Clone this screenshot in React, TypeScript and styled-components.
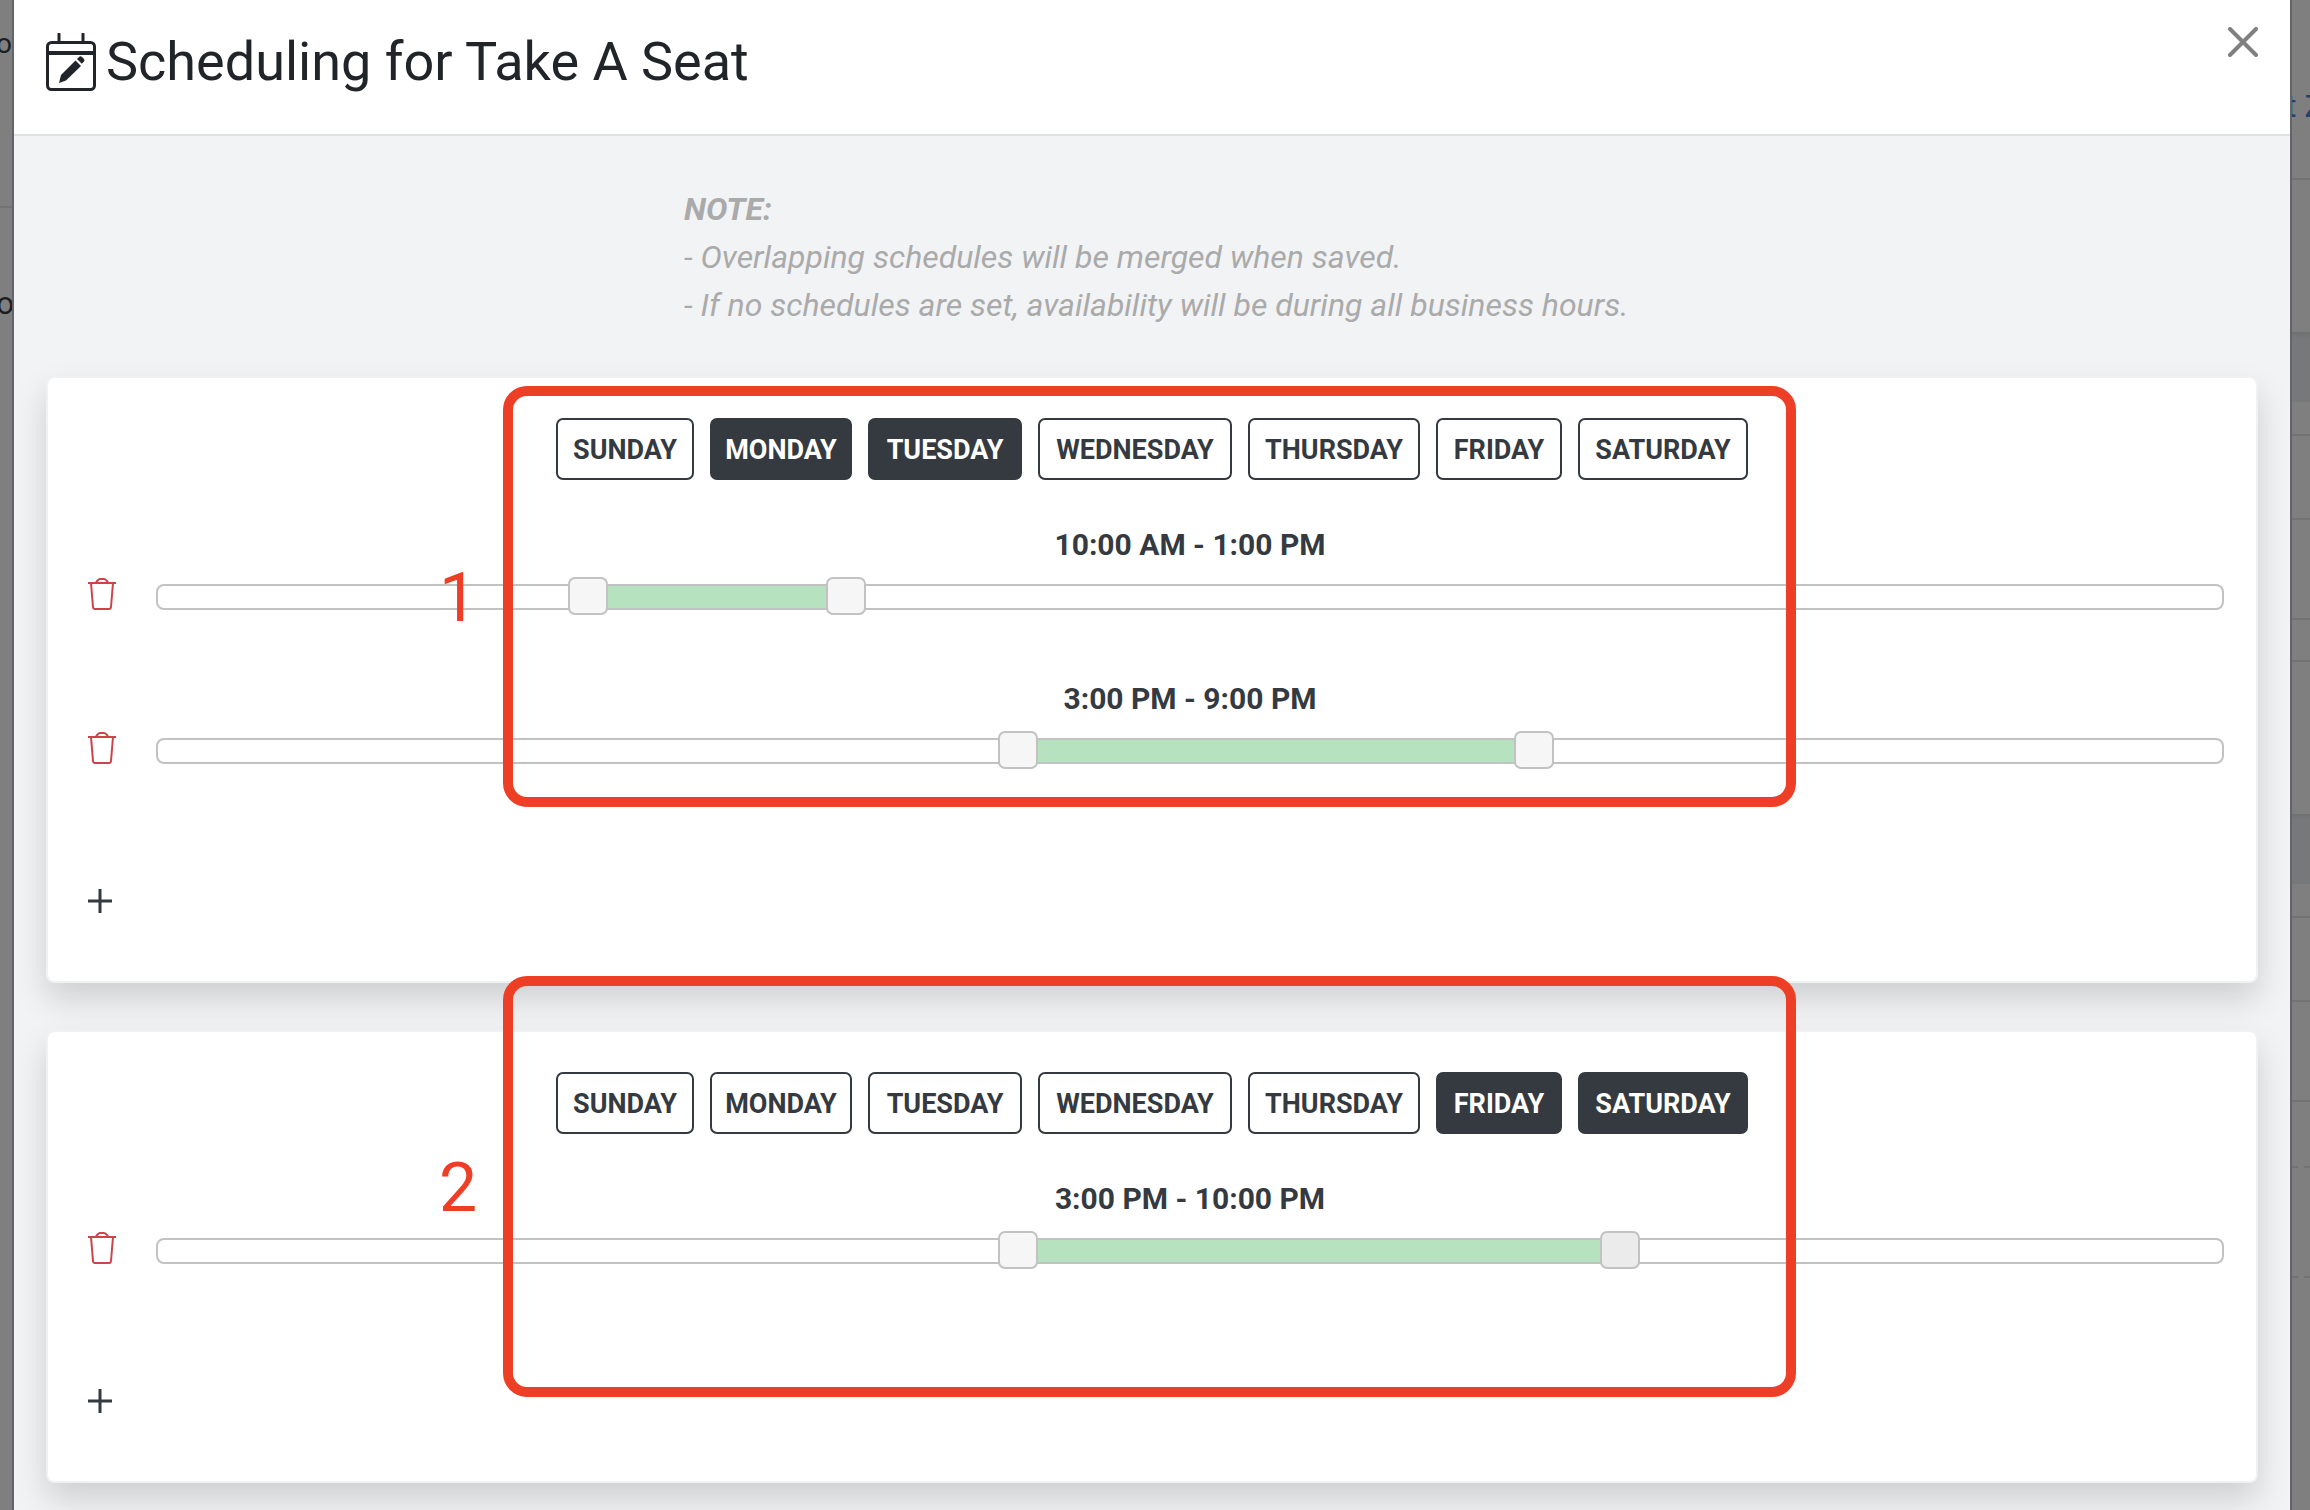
import React, { useState } from "react";
import styled, { createGlobalStyle } from "styled-components";

const ink = "#343a3f";
const mark = "#ec3f26";
const line = "#c2c2c2";

const GlobalStyle = createGlobalStyle`
  *, *::before, *::after { box-sizing: border-box; }
  body {
    margin: 0;
    background: #7f7f7f;
    color: ${ink};
    font-family: Roboto, "Open Sans", sans-serif;
  }
  button { font: inherit; color: inherit; cursor: pointer; }
`;

const Page = styled.div`
  display: grid;
  grid-template-columns: 12px minmax(0, 1fr) 18px;
  height: 100vh;
  overflow: hidden;
`;

const Behind = styled.div`
  display: flex;
  flex-direction: column;
  overflow: hidden;
  background: #7f7f7f;
`;

const Strip = styled.div<{ $h: number; $line?: "solid" | "dashed"; $band?: boolean }>`
  flex: none;
  height: ${(p) => p.$h}px;
  background: ${(p) => (p.$band ? "linear-gradient(#6f7070, #76787a 6px)" : "transparent")};
  border-bottom: ${(p) => (p.$line ? `2px ${p.$line} #727272` : "none")};
`;

const Clipped = styled.div<{ $top: number; $size: number }>`
  margin-left: -4px;
  padding-top: ${(p) => p.$top}px;
  font-size: ${(p) => p.$size}px;
  line-height: 36px;
  color: #1b1e21;
`;

const BackLink = styled.a`
  display: block;
  margin-left: -6px;
  padding-top: 88px;
  font-size: 32px;
  line-height: 36px;
  white-space: nowrap;
  color: #22426b;
  text-decoration: none;
`;

const Modal = styled.main`
  border: solid #646568;
  border-width: 0 2px;
  background: #f1f3f5;
  overflow: hidden;
`;

const Header = styled.header`
  display: flex;
  align-items: flex-start;
  justify-content: space-between;
  height: 136px;
  padding: 27px 32px 0;
  background: #fff;
  border-bottom: 2px solid #dee2e6;
`;

const Title = styled.h1`
  display: flex;
  align-items: center;
  gap: 10px;
  margin: 0;
  font-size: 54px;
  font-weight: 400;
  line-height: 70px;
  color: #212529;
`;

const IconButton = styled.button<{ $color?: string }>`
  display: block;
  padding: 0;
  border: 0;
  background: none;
  color: ${(p) => p.$color ?? ink};
  svg { display: block; }
`;

const Body = styled.div`
  display: flex;
  flex-direction: column;
  gap: 47px;
  padding: 49px 32px;
`;

const Note = styled.p`
  width: 936px;
  max-width: 100%;
  margin: 0 auto;
  font-size: 32px;
  font-style: italic;
  line-height: 48px;
  white-space: nowrap;
  color: #aaa;
`;

const Card = styled.section`
  position: relative;
  padding: 40px 32px 68px 40px;
  background: #fff;
  background-clip: padding-box;
  border: 2px solid #f0f1f3;
  border-radius: 8px;
  box-shadow: 0 16px 32px rgba(0, 0, 0, 0.15);
`;

const Days = styled.div`
  display: grid;
  grid-template-columns: 138px 142px 154px 194px 172px 126px 170px;
  justify-content: center;
  gap: 16px;
  margin: 0 0 40px -8px;
`;

const DayButton = styled.button<{ $on: boolean }>`
  height: 62px;
  padding: 2px 0 0;
  border: 2px solid ${ink};
  border-radius: 7px;
  background: ${(p) => (p.$on ? ink : "#fff")};
  color: ${(p) => (p.$on ? "#fff" : ink)};
  font-size: 27px;
  font-weight: 700;
`;

const Row = styled.div`
  display: grid;
  grid-template-columns: 28px minmax(0, 1fr);
  column-gap: 40px;
  align-items: end;
  padding-bottom: 64px;
`;

const RowLabel = styled.div`
  margin-bottom: 14px;
  font-size: 30px;
  font-weight: 700;
  line-height: 50px;
  text-align: center;
`;

const Track = styled.div`
  position: relative;
  height: 26px;
  border: 2px solid ${line};
  border-radius: 8px;
  background: #fff;
`;

const Fill = styled.div`
  height: 22px;
  background: #b6e2c0;
`;

const Handle = styled.input<{ $active?: boolean }>`
  position: absolute;
  top: -9px;
  left: -20px;
  width: calc(100% + 40px);
  height: 38px;
  margin: 0;
  appearance: none;
  background: none;
  pointer-events: none;
  &::-webkit-slider-thumb {
    appearance: none;
    box-sizing: border-box;
    width: 40px;
    height: 38px;
    border: 2px solid ${line};
    border-radius: 7px;
    background: ${(p) => (p.$active ? "#ebebeb" : "#f6f6f6")};
    pointer-events: auto;
  }
`;

const AddButton = styled(IconButton)`
  margin-top: 61px;
`;

const Outline = styled.div<{ $top: number }>`
  position: absolute;
  top: ${(p) => p.$top}px;
  left: 50%;
  width: 1293px;
  height: 421px;
  margin-left: -649px;
  border: 10px solid ${mark};
  border-radius: 24px;
  pointer-events: none;
`;

const Numeral = styled.span<{ $top: number }>`
  position: absolute;
  top: ${(p) => p.$top}px;
  left: 50%;
  margin-left: -713px;
  font-size: 68px;
  line-height: 80px;
  color: ${mark};
  pointer-events: none;
`;

const CalendarIcon = () => (
  <svg width="50" height="58" viewBox="0 0 50 58" fill="none" stroke="currentColor" strokeWidth="3" aria-hidden="true">
    <rect x="1.5" y="9.5" width="47" height="47" rx="4" />
    <path d="M2 20h46" strokeWidth="4" />
    <path d="M13 1v8M37 1v8" strokeLinecap="round" />
    <path d="M13 50l2-8 14.500-14.500 5.500 5.500L20 47.500z" fill="currentColor" stroke="none" />
    <path d="M31 26l2-2q1.500-1.500 3 0l1.800 1.800q1.500 1.500 0 3l-2 2z" fill="currentColor" stroke="none" />
  </svg>
);

const CloseIcon = () => (
  <svg width="30" height="30" viewBox="0 0 30 30" stroke="currentColor" strokeWidth="4" strokeLinecap="round" aria-hidden="true">
    <path d="M2 2l26 26M28 2L2 28" />
  </svg>
);

const TrashIcon = () => (
  <svg width="28" height="32" viewBox="0 0 28 32" fill="none" stroke="currentColor" strokeWidth="2" aria-hidden="true">
    <path d="M0 5h28" />
    <path d="M8 5q0-1 1.500-2.500Q11 1 12 1h4q1 0 2.500 1.500Q20 4 20 5" />
    <path d="M3 5l2 24q.2 2 2 2h14q1.800 0 2-2l2-24" />
  </svg>
);

const PlusIcon = () => (
  <svg width="24" height="24" viewBox="0 0 24 24" stroke="currentColor" strokeWidth="3" aria-hidden="true">
    <path d="M0 12h24M12 0v24" />
  </svg>
);

const DAY_NAMES = ["SUNDAY", "MONDAY", "TUESDAY", "WEDNESDAY", "THURSDAY", "FRIDAY", "SATURDAY"];
const OPEN = 5;
const CLOSE = 29;

type Range = { from: number; to: number; active?: boolean };
type Schedule = { days: string[]; ranges: Range[]; outlineTop: number; numeralTop: number };

const INITIAL: Schedule[] = [
  { days: ["MONDAY", "TUESDAY"], ranges: [{ from: 10, to: 13 }, { from: 15, to: 21 }], outlineTop: 8, numeralTop: 180 },
  { days: ["FRIDAY", "SATURDAY"], ranges: [{ from: 15, to: 22, active: true }], outlineTop: -56, numeralTop: 116 },
];

const clock = (h: number) => `${h % 12 || 12}:00 ${h % 24 < 12 ? "AM" : "PM"}`;
const percent = (h: number) => ((h - OPEN) / (CLOSE - OPEN)) * 100;

function RangeRow({ range, onChange, onRemove }: { range: Range; onChange: (r: Range) => void; onRemove: () => void }) {
  return (
    <Row>
      <IconButton type="button" $color="#cb444a" aria-label="Delete time range" onClick={onRemove}>
        <TrashIcon />
      </IconButton>
      <div>
        <RowLabel>{`${clock(range.from)} - ${clock(range.to)}`}</RowLabel>
        <Track>
          <Fill
            style={{
              marginLeft: `${percent(range.from)}%`,
              width: `${percent(range.to) - percent(range.from)}%`,
            }}
          />
          <Handle
            type="range"
            aria-label="Start time"
            min={OPEN}
            max={CLOSE}
            value={range.from}
            onChange={(e) => onChange({ ...range, from: Math.min(Number(e.target.value), range.to - 1) })}
          />
          <Handle
            type="range"
            aria-label="End time"
            min={OPEN}
            max={CLOSE}
            value={range.to}
            $active={range.active}
            onChange={(e) => onChange({ ...range, to: Math.max(Number(e.target.value), range.from + 1) })}
          />
        </Track>
      </div>
    </Row>
  );
}

export default function App() {
  const [schedules, setSchedules] = useState(INITIAL);
  const update = (i: number, patch: Partial<Schedule>) =>
    setSchedules((all) => all.map((s, n) => (n === i ? { ...s, ...patch } : s)));

  return (
    <>
      <GlobalStyle />
      <Page>
        <Behind>
          <Strip $h={208} $line="solid"><Clipped $top={26} $size={28}>o</Clipped></Strip>
          <Clipped $top={77} $size={32}>o</Clipped>
        </Behind>
        <Modal>
          <Header>
            <Title><CalendarIcon />Scheduling for Take A Seat</Title>
            <IconButton type="button" $color="#808080" aria-label="Close"><CloseIcon /></IconButton>
          </Header>
          <Body>
            <Note>
              <strong>NOTE:</strong><br />
              - Overlapping schedules will be merged when saved.<br />
              - If no schedules are set, availability will be during all business hours.
            </Note>
            {schedules.map((s, i) => (
              <Card key={i}>
                <Days>
                  {DAY_NAMES.map((day) => {
                    const on = s.days.includes(day);
                    return (
                      <DayButton
                        key={day}
                        type="button"
                        $on={on}
                        aria-pressed={on}
                        onClick={() => update(i, { days: on ? s.days.filter((d) => d !== day) : [...s.days, day] })}
                      >
                        {day}
                      </DayButton>
                    );
                  })}
                </Days>
                {s.ranges.map((range, r) => (
                  <RangeRow
                    key={r}
                    range={range}
                    onChange={(next) => update(i, { ranges: s.ranges.map((x, n) => (n === r ? next : x)) })}
                    onRemove={() => update(i, { ranges: s.ranges.filter((_, n) => n !== r) })}
                  />
                ))}
                <AddButton
                  type="button"
                  aria-label="Add time range"
                  onClick={() => update(i, { ranges: [...s.ranges, { from: 9, to: 17 }] })}
                >
                  <PlusIcon />
                </AddButton>
                <Outline $top={s.outlineTop} />
                <Numeral $top={s.numeralTop}>{i + 1}</Numeral>
              </Card>
            ))}
          </Body>
        </Modal>
        <Behind>
          <Strip $h={180} $line="solid"><BackLink href="#">t Z</BackLink></Strip>
          <Strip $h={152} />
          <Strip $h={70} $band />
          <Strip $h={34} $line="solid" />
          <Strip $h={84} $line="solid" />
          <Strip $h={100} $line="solid" />
          <Strip $h={42} $line="solid" />
          <Strip $h={152} />
          <Strip $h={70} $band />
          <Strip $h={34} $line="solid" />
          <Strip $h={84} $line="solid" />
          <Strip $h={100} $line="solid" />
          <Strip $h={66} $line="dashed" />
          <Strip $h={110} $line="dashed" />
        </Behind>
      </Page>
    </>
  );
}
